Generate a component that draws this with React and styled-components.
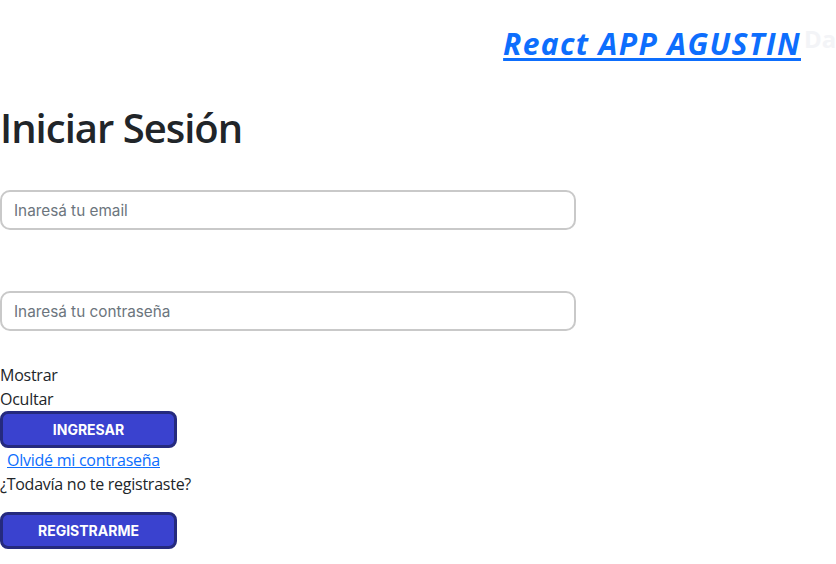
import React from "react";
import styled, { createGlobalStyle } from "styled-components";

const Global = createGlobalStyle`
  html, body { margin: 0; padding: 0; background: #fff; }
  body { font-family: "Open Sans", "Noto Sans", sans-serif; color: #212529; font-size: 16px; line-height: 24px; }
  * { box-sizing: border-box; }
`;

const Page = styled.div`
  display: flex;
  flex-direction: column;
`;

const Header = styled.header`
  display: flex;
  justify-content: flex-end;
  align-items: center;
  gap: 3px;
  padding-top: 20px;
  height: 68px;
`;

const Brand = styled.a`
  font-family: "Open Sans", "Noto Sans", sans-serif;
  font-size: 30px;
  line-height: 40px;
  font-weight: 700;
  font-style: italic;
  letter-spacing: 1.35px;
  color: #0d6efd;
  text-decoration: underline;
  text-underline-offset: 3px;
  text-decoration-thickness: 3px;
  white-space: nowrap;
`;

const ThemeToggle = styled.span`
  font-family: "Open Sans", sans-serif;
  font-size: 24px;
  font-weight: 700;
  color: #f3f4f7;
  width: 32px;
  overflow: hidden;
  white-space: nowrap;
  margin-top: -10px;
`;

const Main = styled.main`
  display: flex;
  flex-direction: column;
  align-items: flex-start;
`;

const Title = styled.h1`
  margin: 36px 0 38px;
  font-size: 40px;
  line-height: 48px;
  font-weight: 600;
  letter-spacing: -1px;
  color: #212529;
`;

const Field = styled.input`
  width: 576px;
  height: 40px;
  border: 2px solid #c9c9c9;
  border-radius: 10px;
  padding: 0 12px;
  font-family: "Inter", "Lato", sans-serif;
  font-size: 15.3px;
  color: #212529;
  margin-bottom: ${(p) => p.$gap || 0}px;
  outline: none;
  &::placeholder { color: #6c757d; }
`;

const Line = styled.span`
  display: block;
  letter-spacing: -0.25px;
`;

const Button = styled.button`
  width: 177px;
  height: 37px;
  background: #3a42cf;
  border: 3px solid #252a7e;
  border-radius: 8px;
  color: #fff;
  font-family: "Inter", "Lato", sans-serif;
  font-size: 14px;
  font-weight: 700;
  cursor: pointer;
  margin-top: ${(p) => p.$mt || 0}px;
`;

const Link = styled.a`
  margin-left: 7px;
  color: #0d6efd;
  text-decoration: underline;
  letter-spacing: -0.25px;
`;

export default function App() {
  return (
    <Page>
      <Global />
      <Header>
        <Brand href="#">React APP AGUSTIN</Brand>
        <ThemeToggle>Dark</ThemeToggle>
      </Header>
      <Main>
        <Title>Iniciar Sesión</Title>
        <Field type="email" placeholder="Inaresá tu email" $gap={61} />
        <Field type="password" placeholder="Inaresá tu contraseña" $gap={32} />
        <Line>Mostrar</Line>
        <Line>Ocultar</Line>
        <Button>INGRESAR</Button>
        <Link href="#">Olvidé mi contraseña</Link>
        <Line>¿Todavía no te registraste?</Line>
        <Button $mt={16}>REGISTRARME</Button>
      </Main>
    </Page>
  );
}
